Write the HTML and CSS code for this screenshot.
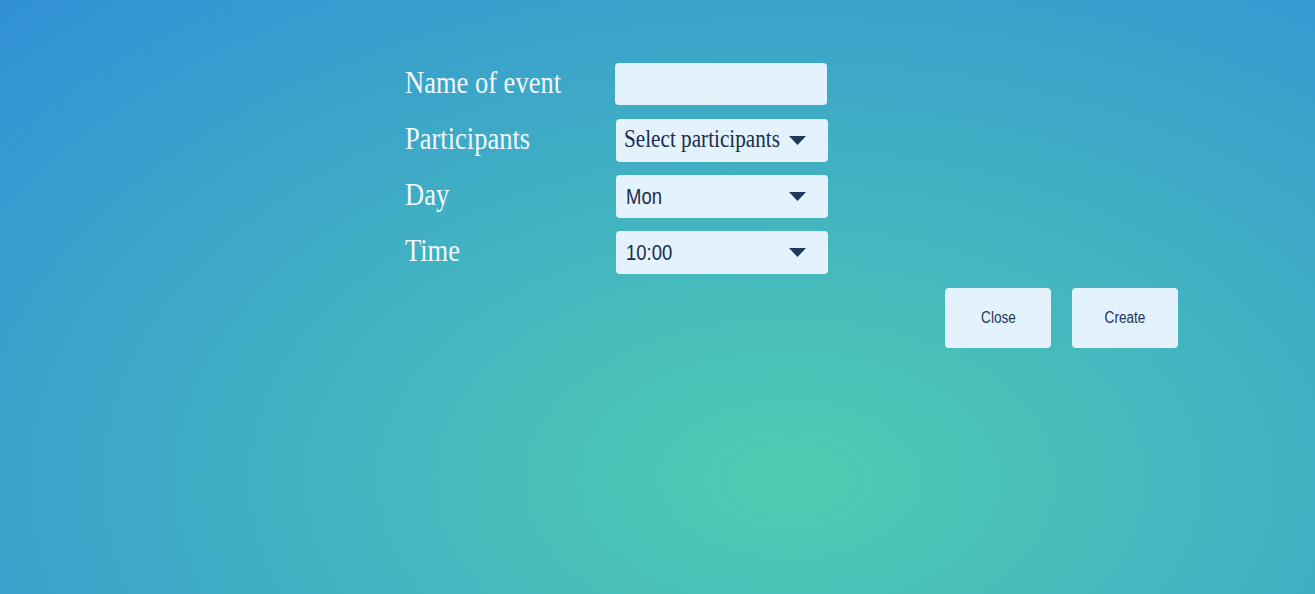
FILE: index.html
```html
<!DOCTYPE html>
<html lang="en">
<head>
<meta charset="utf-8">
<title>New event</title>
<link rel="stylesheet" href="styles.css">
</head>
<body>
<main class="page">
  <form class="form">
    <label class="label" for="name"><span class="sq">Name of event</span></label>
    <input class="field" id="name" type="text">

    <div class="label"><span class="sq">Participants</span></div>
    <div class="select select-serif"><span class="sq">Select participants</span><svg class="caret" width="17" height="9" viewBox="0 0 17 9"><path d="M0 0H17L8.5 9Z"/></svg></div>

    <div class="label"><span class="sq">Day</span></div>
    <div class="select"><span class="sq">Mon</span><svg class="caret" width="17" height="9" viewBox="0 0 17 9"><path d="M0 0H17L8.5 9Z"/></svg></div>

    <div class="label"><span class="sq">Time</span></div>
    <div class="select"><span class="sq">10:00</span><svg class="caret" width="17" height="9" viewBox="0 0 17 9"><path d="M0 0H17L8.5 9Z"/></svg></div>
  </form>
  <div class="actions">
    <button class="btn" type="button"><span class="sqc">Close</span></button>
    <button class="btn" type="button"><span class="sqc">Create</span></button>
  </div>
</main>
</body>
</html>
```
FILE: styles.css
```css
html, body {
  margin: 0;
  height: 100%;
}
body {
  background: radial-gradient(ellipse farthest-corner at 790px 480px, #4fcdb1 0%, #3190d7 100%);
  background-attachment: fixed;
  overflow: hidden;
}
.page {
  padding-top: 63px;
}
.form {
  display: grid;
  grid-template-columns: 210px 213px;
  grid-auto-rows: 43px;
  row-gap: 13px;
  padding-left: 405px;
}
.label {
  font-family: "Liberation Serif", "Times New Roman", serif;
  font-size: 31px;
  line-height: 40px;
  color: #f2f9ff;
  align-self: start;
}
.sq {
  display: inline-block;
  transform: scaleX(0.855);
  transform-origin: 0 50%;
  white-space: nowrap;
}
.sqc {
  display: inline-block;
  transform: scaleX(0.85);
  transform-origin: 50% 50%;
  white-space: nowrap;
}
.field {
  width: 212px;
  height: 42px;
  box-sizing: border-box;
  border: none;
  border-radius: 4px;
  background: #e3f2fd;
  margin: 0;
  padding: 0 8px;
  outline: none;
}
.select {
  margin-left: 1px;
  width: 212px;
  box-sizing: border-box;
  border-radius: 4px;
  background: #e3f2fd;
  display: flex;
  align-items: center;
  padding: 0 22px 0 10px;
  font-family: "Liberation Sans", Arial, sans-serif;
  font-size: 22px;
  color: #1b2d4b;
}
.select .sq {
  flex: 1 1 0;
  min-width: 0;
  transform: scaleX(0.84);
}
.select-serif {
  font-family: "Liberation Serif", "Times New Roman", serif;
  font-size: 25px;
  padding-left: 8px;
  padding-bottom: 3px;
}
.select-serif .sq {
  transform: scaleX(0.848);
}
.select-serif .caret {
  margin-top: 3px;
}
.caret {
  fill: #1c3b59;
  flex: none;
}
.actions {
  display: flex;
  justify-content: flex-end;
  gap: 21px;
  width: 1178px;
  margin-top: 14px;
}
.btn {
  width: 106px;
  height: 60px;
  border: none;
  border-radius: 4px;
  background: #e3f2fd;
  font-family: "Liberation Sans", Arial, sans-serif;
  font-size: 16px;
  color: #1d3557;
  padding: 0;
  margin: 0;
}
```
